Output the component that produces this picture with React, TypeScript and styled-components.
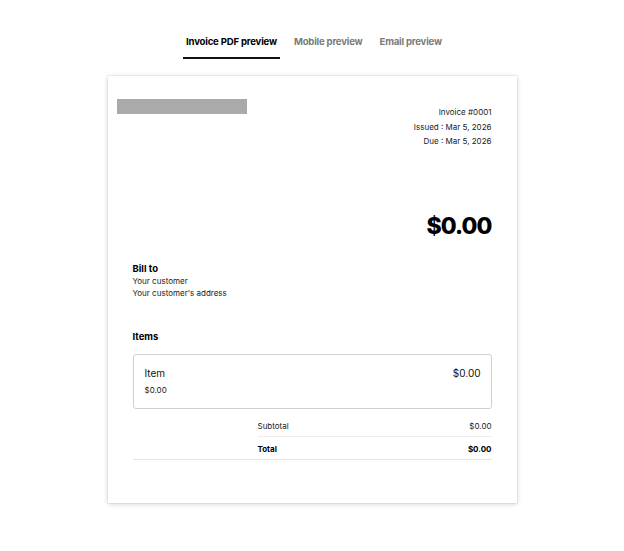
import * as React from 'react';
import styled, { createGlobalStyle } from 'styled-components';

// ink #000, muted tabs #777, hairlines #e6e6e6

const GlobalStyle = createGlobalStyle`
    html, body {
        margin: 0;
        padding: 0;
        background: #ffffff;
    }
    body {
        font-family: Inter, "Liberation Sans", Arial, sans-serif;
        color: #111;
        -webkit-font-smoothing: antialiased;
    }
`;

const Page = styled.div`
    display: flex;
    flex-direction: column;
    align-items: center;
    padding-top: 35px;
    min-height: 551px;
    box-sizing: border-box;
`;

const Tabs = styled.div`
    display: flex;
    gap: 11px;
    margin-left: 4px;
`;

const Tab = styled.div<{ $active?: boolean }>`
    font-size: 9.6px;
    line-height: 14px;
    font-weight: 700;
    letter-spacing: -0.2px;
    padding: 0 3px 8px;
    color: ${(p) => (p.$active ? '#000' : '#7a7a7a')};
    border-bottom: 2px solid ${(p) => (p.$active ? '#111' : 'transparent')};
`;

const Sheet = styled.div`
    width: 409px;
    min-height: 427px;
    box-sizing: border-box;
    margin-top: 17px;
    padding: 23px 25px 0;
    background: #fff;
    box-shadow: 0 0 0 1px rgba(0, 0, 0, 0.04), 0 1px 5px rgba(0, 0, 0, 0.18);
    font-size: 8px;
`;

const Header = styled.div`
    display: flex;
    justify-content: space-between;
    align-items: flex-start;
`;

const LogoPlaceholder = styled.div`
    width: 130px;
    height: 15px;
    margin-left: -16px;
    background: #aaaaaa;
`;

const Meta = styled.div`
    margin-top: 6px;
    text-align: right;
    line-height: 14.5px;
    color: #1a1a1a;
`;

const Amount = styled.div`
    margin-top: 62px;
    text-align: right;
    font-size: 23px;
    line-height: 30px;
    font-weight: 800;
    letter-spacing: -0.9px;
    color: #000;
`;

const Block = styled.div<{ $gap: number }>`
    margin-top: ${(p) => p.$gap}px;
    line-height: 12px;
    color: #1a1a1a;
`;

const BlockTitle = styled.div`
    font-size: 9.5px;
    font-weight: 700;
    color: #000;
`;

const ItemCard = styled.div`
    margin-top: 11px;
    padding: 11px 10px 12px 11px;
    border: 1px solid #cfcfcf;
    border-radius: 3px;
`;

const ItemRow = styled.div`
    display: flex;
    justify-content: space-between;
    font-size: 10px;
    line-height: 14px;
    color: #111;
`;

const ItemPrice = styled.div`
    margin-top: 4px;
    font-size: 8px;
    line-height: 12px;
    color: #1a1a1a;
`;

const SumRow = styled.div<{ $wide?: boolean; $strong?: boolean }>`
    display: flex;
    justify-content: space-between;
    margin-left: ${(p) => (p.$wide ? 0 : 125)}px;
    padding: 6px 0 4px ${(p) => (p.$wide ? 125 : 0)}px;
    line-height: 12px;
    font-size: 8px;
    font-weight: ${(p) => (p.$strong ? 700 : 400)};
    color: ${(p) => (p.$strong ? '#000' : '#1a1a1a')};
    border-bottom: 1px solid ${(p) => (p.$wide ? '#e4e4e4' : '#ececec')};
`;

const Totals = styled.div`
    margin-top: 5px;
`;

const App = () => {
    return (
        <>
            <GlobalStyle />
            <Page>
                <Tabs>
                    <Tab $active>Invoice PDF preview</Tab>
                    <Tab>Mobile preview</Tab>
                    <Tab>Email preview</Tab>
                </Tabs>

                <Sheet>
                    <Header>
                        <LogoPlaceholder />
                        <Meta>
                            <div>Invoice #0001</div>
                            <div>Issued : Mar 5, 2026</div>
                            <div>Due : Mar 5, 2026</div>
                        </Meta>
                    </Header>

                    <Amount>$0.00</Amount>

                    <Block $gap={22}>
                        <BlockTitle>Bill to</BlockTitle>
                        <div>Your customer</div>
                        <div>Your customer's address</div>
                    </Block>

                    <Block $gap={32}>
                        <BlockTitle>Items</BlockTitle>
                    </Block>

                    <ItemCard>
                        <ItemRow>
                            <span>Item</span>
                            <span>$0.00</span>
                        </ItemRow>
                        <ItemPrice>$0.00</ItemPrice>
                    </ItemCard>

                    <Totals>
                        <SumRow>
                            <span>Subtotal</span>
                            <span>$0.00</span>
                        </SumRow>
                        <SumRow $wide $strong>
                            <span>Total</span>
                            <span>$0.00</span>
                        </SumRow>
                    </Totals>
                </Sheet>
            </Page>
        </>
    );
};

export default App;
